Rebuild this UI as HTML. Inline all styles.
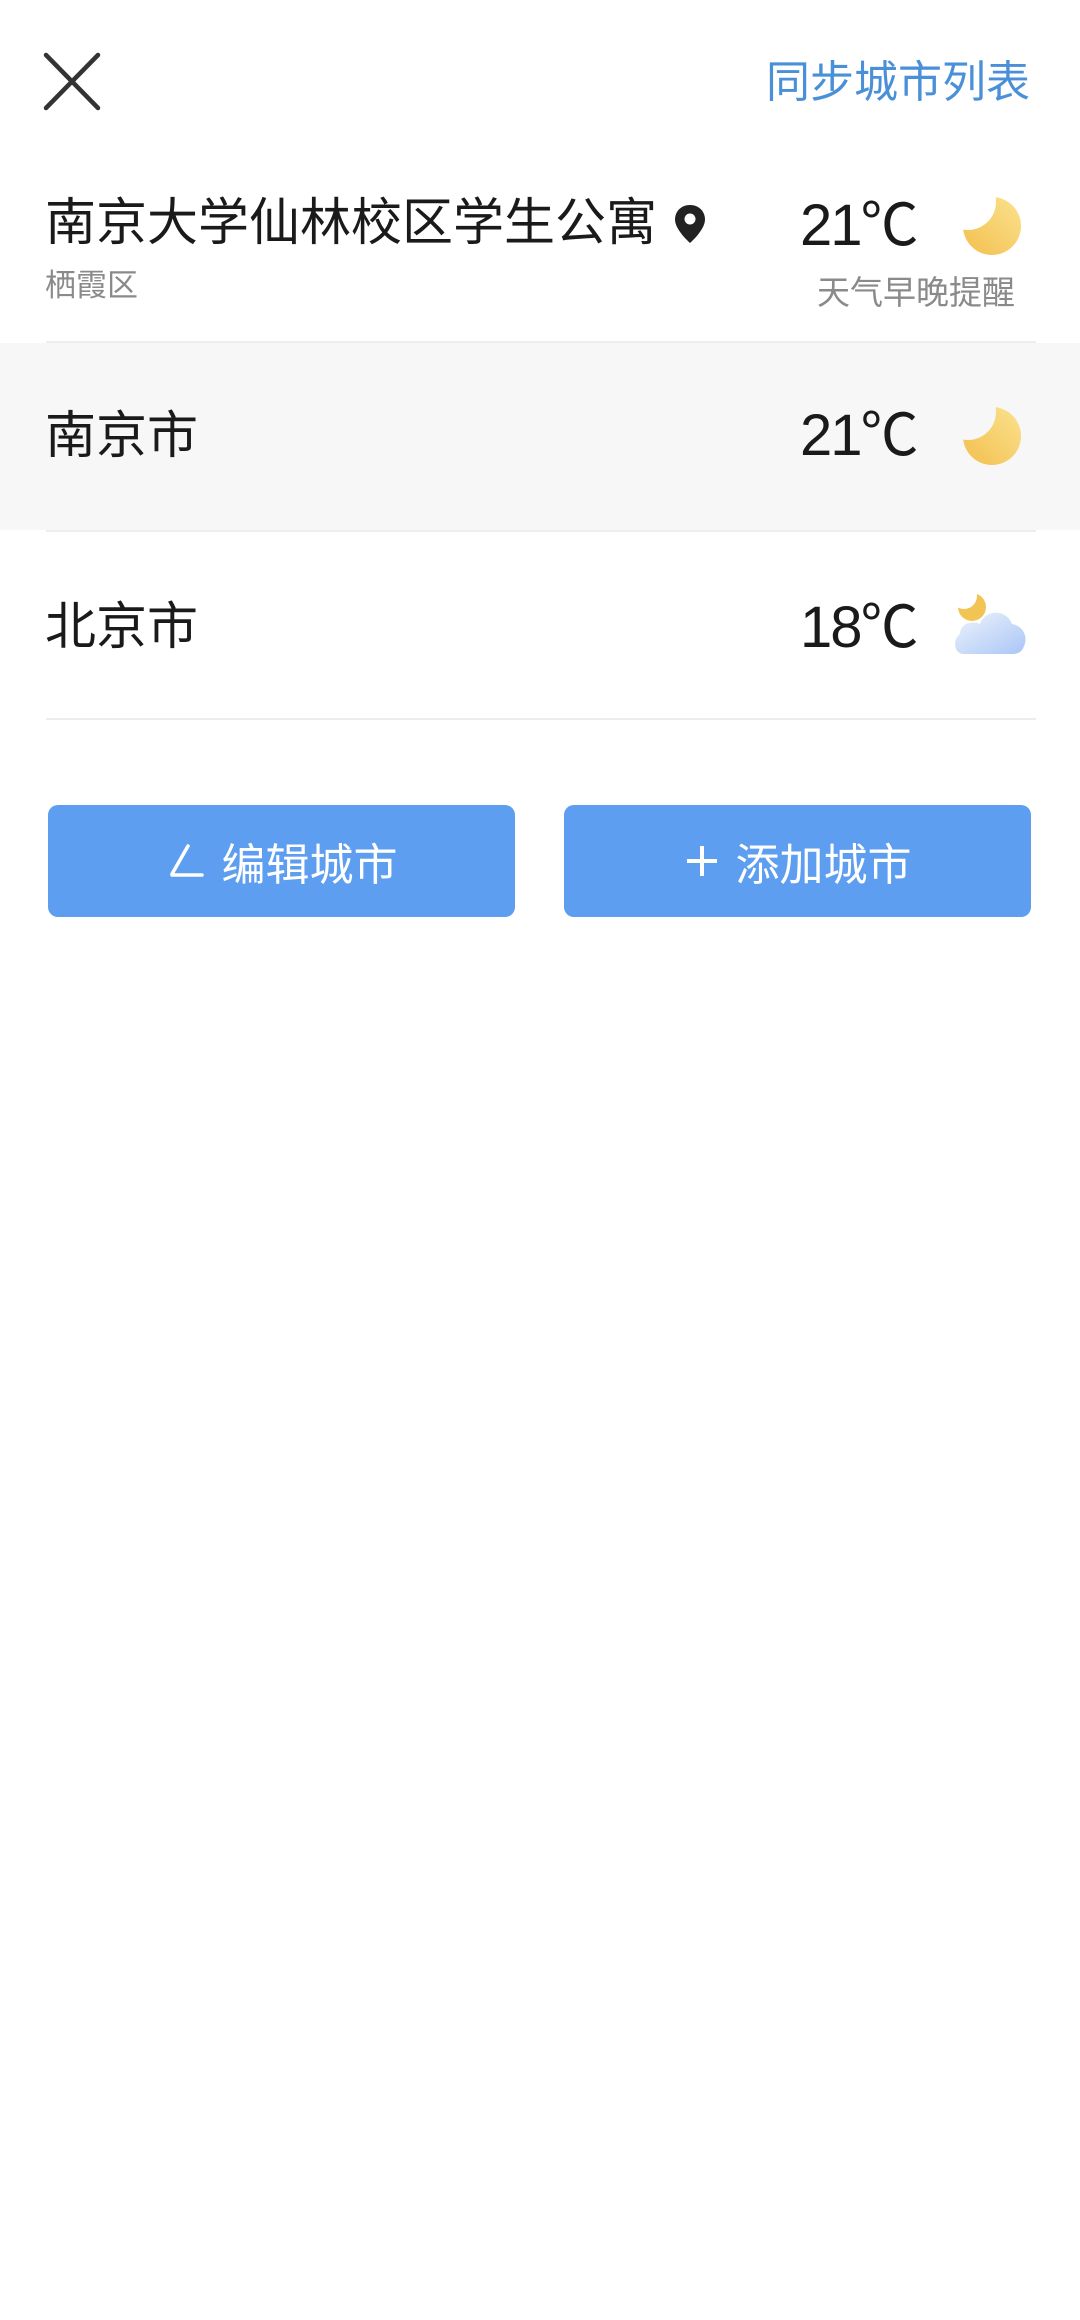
<!DOCTYPE html>
<html><head><meta charset="utf-8"><style>
*{margin:0;padding:0;box-sizing:border-box}
body{width:1080px;height:2320px;background:#fff;position:relative;overflow:hidden;font-family:"Liberation Sans","Noto Sans CJK SC",sans-serif;color:#1a1a1a}
.a{position:absolute;white-space:nowrap}
.line{position:absolute;left:46px;width:990px;height:2px;background:#ededed}
.btn{position:absolute;top:805px;height:112px;width:467px;background:#5d9ef0;border-radius:10px;color:#fff;font-size:44px;display:flex;align-items:center;justify-content:center}
.t{font-size:58px;left:800px;letter-spacing:-2px}
</style></head><body>
<svg class="a" style="left:40px;top:50px" width="66" height="64" viewBox="0 0 66 64"><path d="M6 5 L58 58 M58 5 L6 58" stroke="#333" stroke-width="4.5" stroke-linecap="round"/></svg>
<div class="a" style="left:766px;top:54px;font-size:44px;color:#4a90d9;line-height:58px">同步城市列表</div>

<div class="a" style="left:45px;top:190px;font-size:51px;line-height:66px">南京大学仙林校区学生公寓</div>
<svg class="a" style="left:672px;top:203px" width="36" height="42" viewBox="0 0 36 42"><path d="M18 2C9 2 3 8.5 3 16.5 3 27 18 40 18 40S33 27 33 16.5C33 8.5 27 2 18 2Z" fill="#222"/><circle cx="18" cy="16" r="5.5" fill="#fff"/></svg>
<div class="a" style="left:45px;top:266px;font-size:31px;color:#8a8a8a;line-height:40px">栖霞区</div>
<div class="a t" style="top:191px;line-height:70px">21℃</div>
<div class="a" style="left:817px;top:272px;font-size:33px;color:#8a8a8a;line-height:42px">天气早晚提醒</div>

<svg class="a" style="left:958px;top:192px" width="70" height="70" viewBox="0 0 70 70"><defs><linearGradient id="g" x1="0" y1="1" x2="1" y2="0"><stop offset="0" stop-color="#f2bf4e"/><stop offset="1" stop-color="#fbe28e"/></linearGradient><mask id="m"><rect width="70" height="70" fill="#fff"/><circle cx="10" cy="10" r="28" fill="#000"/></mask></defs><circle cx="34" cy="34" r="29" fill="url(#g)" mask="url(#m)"/></svg>

<div class="line" style="top:341px"></div>
<div class="a" style="left:0;top:343px;width:1080px;height:187px;background:#f7f7f7"></div>
<div class="a" style="left:45px;top:403px;font-size:51px;line-height:66px">南京市</div>
<div class="a t" style="top:401px;line-height:70px">21℃</div>
<svg class="a" style="left:958px;top:402px" width="70" height="70" viewBox="0 0 70 70"><circle cx="34" cy="34" r="29" fill="url(#g)" mask="url(#m)"/></svg>
<div class="line" style="top:530px"></div>

<div class="a" style="left:45px;top:594px;font-size:51px;line-height:66px">北京市</div>
<div class="a t" style="top:593px;line-height:70px">18℃</div>
<svg class="a" style="left:950px;top:588px" width="80" height="72" viewBox="0 0 80 72"><defs><linearGradient id="c" x1="0" y1="0" x2="1" y2="1"><stop offset="0" stop-color="#eef3fb"/><stop offset="1" stop-color="#a9c6f7"/></linearGradient><mask id="m2"><rect width="80" height="72" fill="#fff"/><circle cx="14" cy="8" r="13" fill="#000"/></mask></defs><circle cx="22" cy="19" r="14" fill="#f2c453" mask="url(#m2)"/><path d="M14 66 C4 66 2 52 10 46 C10 36 22 32 30 36 C34 22 56 20 62 36 C74 38 78 50 74 58 C72 64 68 66 62 66 Z" fill="url(#c)"/></svg>
<div class="line" style="top:718px"></div>

<div class="btn" style="left:48px"><svg width="40" height="40" viewBox="0 0 40 40" style="margin-right:16px"><path d="M22 5 L6 33 M6 34 L36 34" stroke="#fff" stroke-width="3.5" stroke-linecap="round"/></svg>编辑城市</div>
<div class="btn" style="left:564px"><svg width="36" height="36" viewBox="0 0 36 36" style="margin-right:16px"><path d="M18 3V33M3 18H33" stroke="#fff" stroke-width="4"/></svg>添加城市</div>
</body></html>
